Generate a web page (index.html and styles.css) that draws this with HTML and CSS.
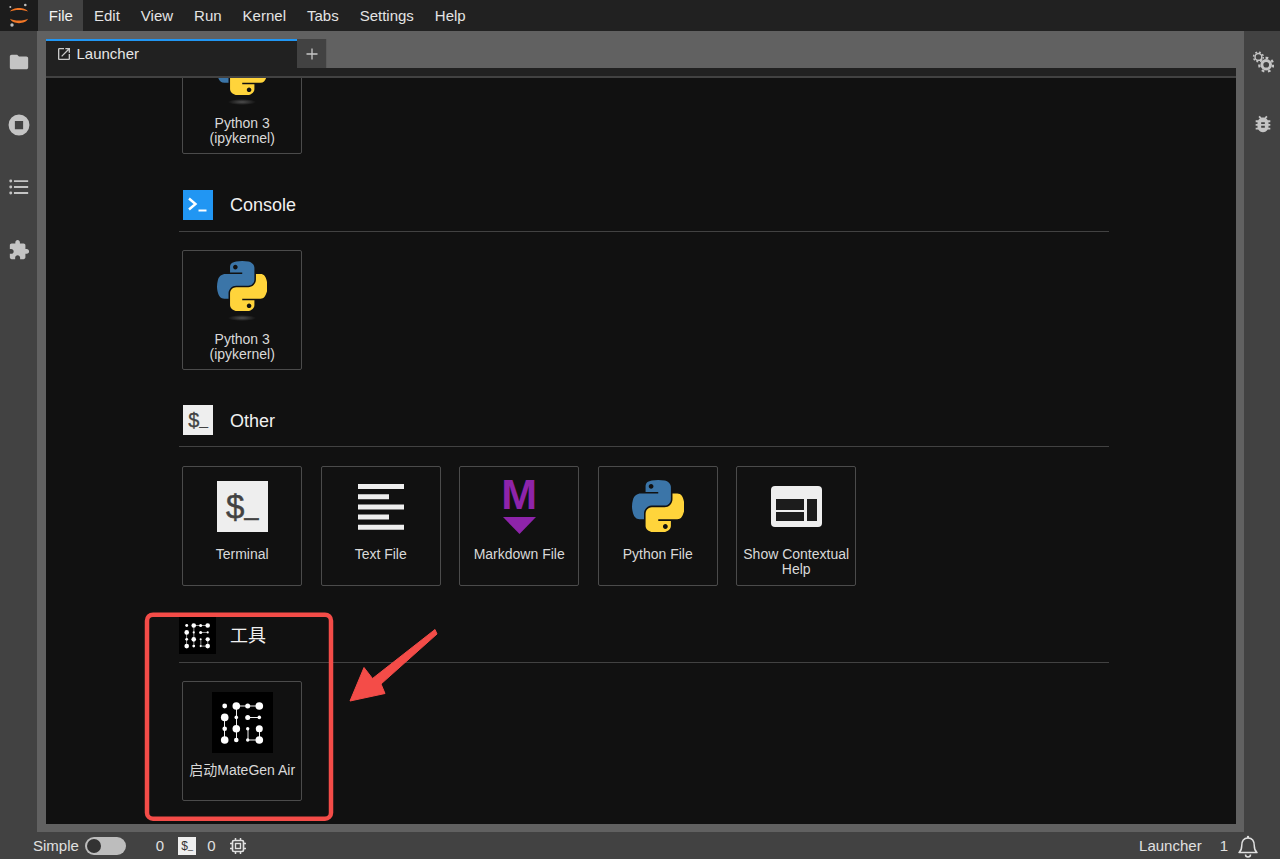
FILE: index.html
```html
<!DOCTYPE html>
<html lang="en">
<head>
<meta charset="utf-8">
<title>JupyterLab</title>
<link rel="stylesheet" href="styles.css">
</head>
<body>
<svg class="defs" width="0" height="0" aria-hidden="true">
  <symbol id="py" viewBox="0 0 110 110">
    <path fill="#3b75a8" d="M54.919 0c-4.584.022-8.961.413-12.813 1.095C30.76 3.099 28.7 7.295 28.7 15.032v10.219h26.813v3.406H18.638c-7.793 0-14.616 4.684-16.75 13.594-2.462 10.213-2.571 16.586 0 27.25 1.905 7.938 6.457 13.594 14.25 13.594h9.218v-12.25c0-8.85 7.657-16.656 16.75-16.656h26.782c7.454 0 13.406-6.138 13.406-13.625v-25.531c0-7.266-6.13-12.725-13.406-13.937C64.282.328 59.502-.02 54.918 0zm-14.5 8.22c2.77 0 5.031 2.298 5.031 5.125 0 2.816-2.262 5.093-5.031 5.093-2.78 0-5.031-2.277-5.031-5.093 0-2.827 2.251-5.125 5.031-5.125z"/>
    <path fill="#ffd43b" d="M85.638 28.657v11.906c0 9.231-7.826 17-16.75 17H42.106c-7.336 0-13.406 6.279-13.406 13.625v25.532c0 7.266 6.318 11.54 13.406 13.625 8.487 2.496 16.626 2.947 26.782 0 6.75-1.954 13.406-5.888 13.406-13.625V86.5H55.513v-3.405h40.187c7.793 0 10.696-5.436 13.406-13.594 2.8-8.399 2.68-16.476 0-27.25-1.926-7.757-5.604-13.594-13.406-13.594H85.638zM70.575 93.313c2.78 0 5.03 2.277 5.03 5.093 0 2.827-2.25 5.125-5.03 5.125-2.77 0-5.03-2.298-5.03-5.125 0-2.816 2.26-5.093 5.03-5.093z"/>
  </symbol>
  <symbol id="kernel" viewBox="0 0 52 66">
    <defs><radialGradient id="shadow"><stop offset="0" stop-color="#4e4e4e"/><stop offset="1" stop-color="#111"/></radialGradient></defs>
    <use href="#py" x="1" y="0" width="50" height="50"/>
    <ellipse cx="26" cy="57" rx="14" ry="3" fill="url(#shadow)"/>
  </symbol>
  <symbol id="mate" viewBox="0 0 61 61">
    <rect width="61" height="61" fill="#000"/>
    <g stroke="#eee" stroke-width="1" fill="none">
      <path d="M24.5 14H47.5M12.5 25.5V48M24.5 14V48M36 25.5H47.5M36 37V48H47.5V37"/>
    </g>
    <g fill="#fff">
      <circle cx="12.7" cy="14" r="2.4"/><circle cx="24.3" cy="14" r="3.8"/><circle cx="35.7" cy="14" r="2.5"/><circle cx="47.3" cy="14" r="3.8"/>
      <circle cx="12.7" cy="25.4" r="3.8"/><circle cx="24.3" cy="25.4" r="1.8"/><circle cx="35.7" cy="25.4" r="2.5"/><circle cx="47.3" cy="25.4" r="1.8"/>
      <circle cx="12.7" cy="36.8" r="2.3"/><circle cx="24.3" cy="36.8" r="3.8"/><circle cx="35.7" cy="36.8" r="1.7"/><circle cx="47.3" cy="36.8" r="3.5"/>
      <circle cx="12.7" cy="48" r="3.8"/><circle cx="24.3" cy="48" r="2.3"/><circle cx="35.7" cy="48" r="1.7"/><circle cx="47.3" cy="48" r="3.8"/>
    </g>
  </symbol>
</svg>

<div class="app">
  <header class="menubar">
    <div class="logo">
      <svg width="38" height="31" viewBox="0 0 38 31">
        <path fill="#f37726" d="M10 11.600C12.500 6.800 25.500 6.800 28 11.600 24.500 9.300 13.500 9.300 10 11.600z"/>
        <path fill="#f37726" d="M10 18.800C13.500 21.200 24.500 21.200 28 18.800 25.500 24.600 12.500 24.600 10 18.800z"/>
        <circle cx="25.300" cy="5" r="1.300" fill="#bdbdbd"/>
        <circle cx="10.300" cy="7" r="1" fill="#bdbdbd"/>
        <circle cx="12" cy="25" r="1.700" fill="#bdbdbd"/>
      </svg>
    </div>
    <nav class="menu">
      <span class="menu-item active">File</span>
      <span class="menu-item">Edit</span>
      <span class="menu-item">View</span>
      <span class="menu-item">Run</span>
      <span class="menu-item">Kernel</span>
      <span class="menu-item">Tabs</span>
      <span class="menu-item">Settings</span>
      <span class="menu-item">Help</span>
    </nav>
  </header>

  <div class="middle">
    <aside class="side side-left">
      <svg class="side-icon" viewBox="0 0 24 24"><path d="M10 4H4c-1.100 0-1.990.9-1.990 2L2 18c0 1.100.9 2 2 2h16c1.100 0 2-.9 2-2V8c0-1.100-.9-2-2-2h-8l-2-2z"/></svg>
      <svg class="side-icon" viewBox="0 0 24 24"><path fill-rule="evenodd" d="M12 .6a11.400 11.400 0 1 0 0 22.800A11.400 11.400 0 0 0 12 .6zM7.500 7.500h9v9h-9z"/></svg>
      <svg class="side-icon" viewBox="0 0 24 24"><path d="M6.500 4.500h15.500v2H6.500zM6.500 11h15.500v2H6.500zM6.500 17.500h15.500v2H6.500z"/><circle cx="3" cy="5.500" r="1.600"/><circle cx="3" cy="12" r="1.600"/><circle cx="3" cy="18.500" r="1.600"/></svg>
      <svg class="side-icon" viewBox="0 0 24 24"><path d="M20.500 11H19V7c0-1.100-.9-2-2-2h-4V3.500C13 2.120 11.880 1 10.500 1S8 2.120 8 3.500V5H4c-1.100 0-1.990.9-1.990 2v3.800H3.500c1.490 0 2.700 1.210 2.700 2.700s-1.210 2.700-2.700 2.700H2V20c0 1.100.9 2 2 2h3.800v-1.500c0-1.490 1.210-2.700 2.700-2.700 1.490 0 2.700 1.210 2.700 2.700V22H17c1.100 0 2-.9 2-2v-4h1.500c1.380 0 2.500-1.120 2.500-2.500S21.880 11 20.500 11z"/></svg>
    </aside>

    <main class="dock">
      <div class="tabs">
        <div class="tab">
          <svg class="tab-icon" viewBox="0 0 24 24"><path d="M19 19H5V5h7V3H5c-1.110 0-2 .9-2 2v14c0 1.100.89 2 2 2h14c1.100 0 2-.9 2-2v-7h-2v7zM14 3v2h3.590l-9.830 9.830 1.410 1.410L19 6.410V10h2V3h-7z"/></svg>
          <span>Launcher</span>
        </div>
        <div class="tab-add">
          <svg width="12" height="12" viewBox="0 0 12 12"><path d="M6 .5v11M.5 6h11" stroke="#c8c8c8" stroke-width="1.300"/></svg>
        </div>
      </div>
      <div class="toolbar"></div>
      <div class="launcher">
        <div class="launcher-inner">
          <section class="group group-first">
            <div class="cards">
              <div class="card">
                <div class="card-icon pt-10"><svg width="52" height="66"><use href="#kernel"/></svg></div>
                <div class="card-label">Python 3<br>(ipykernel)</div>
              </div>
            </div>
          </section>

          <section class="group">
            <div class="group-head">
              <div class="head-icon console-icon">
                <svg width="30" height="30" viewBox="0 0 30 30"><path d="M6 8.500 12.500 14 6 19.500" fill="none" stroke="#fff" stroke-width="2.400"/><path d="M15.500 20.500h8" stroke="#fff" stroke-width="2"/></svg>
              </div>
              <h2>Console</h2>
            </div>
            <div class="cards">
              <div class="card">
                <div class="card-icon pt-10"><svg width="52" height="66"><use href="#kernel"/></svg></div>
                <div class="card-label">Python 3<br>(ipykernel)</div>
              </div>
            </div>
          </section>

          <section class="group">
            <div class="group-head">
              <div class="head-icon term-small"><span>$</span><span class="under">_</span></div>
              <h2>Other</h2>
            </div>
            <div class="cards">
              <div class="card">
                <div class="card-icon pt-14"><div class="term-big"><span>$</span><span class="under">_</span></div></div>
                <div class="card-label">Terminal</div>
              </div>
              <div class="card">
                <div class="card-icon pt-17">
                  <svg width="46" height="46" viewBox="0 0 46 46" class="light"><path d="M0 0h46v5H0zM0 10.200h31v5H0zM0 20.400h46v5H0zM0 30.600h31v5H0zM0 40.700h46v5H0z"/></svg>
                </div>
                <div class="card-label">Text File</div>
              </div>
              <div class="card">
                <div class="card-icon md-icon">
                  <span class="md-m">M</span>
                  <svg width="33" height="17" viewBox="0 0 33 17"><path d="M0 0h33L16.500 17z" fill="#8e24aa"/></svg>
                </div>
                <div class="card-label">Markdown File</div>
              </div>
              <div class="card">
                <div class="card-icon pt-13"><svg width="52" height="52"><use href="#py"/></svg></div>
                <div class="card-label">Python File</div>
              </div>
              <div class="card">
                <div class="card-icon pt-19">
                  <svg width="51" height="41" viewBox="0 0 51 41"><rect width="51" height="41" rx="4" fill="#eee"/><path d="M5 13h28v11H5zM5 26h28v9H5zM36 13h10v22H36z" fill="#1c1c1c"/></svg>
                </div>
                <div class="card-label">Show Contextual<br>Help</div>
              </div>
            </div>
          </section>

          <section class="group">
            <div class="group-head">
              <svg class="head-mate" width="37" height="37"><use href="#mate"/></svg>
              <h2 class="cjk">工具</h2>
            </div>
            <div class="cards">
              <div class="card">
                <div class="card-icon pt-10"><svg width="61" height="61"><use href="#mate"/></svg></div>
                <div class="card-label cjk">启动MateGen Air</div>
              </div>
            </div>
          </section>
        </div>
      </div>
    </main>

    <aside class="side side-right">
      <svg class="side-icon gears" viewBox="0 0 24 24">
        <g fill="none" stroke="#c4c4c4">
          <circle cx="7" cy="6.500" r="3.700" stroke-width="1.600"/>
          <circle cx="7" cy="6.500" r="5.300" stroke-width="1.600" stroke-dasharray="2.100 2.060"/>
          <circle cx="15.500" cy="15" r="4.700" stroke-width="3.200"/>
          <circle cx="15.500" cy="15" r="7.600" stroke-width="2.400" stroke-dasharray="3 3.970"/>
        </g>
      </svg>
      <svg class="side-icon" viewBox="0 0 24 24"><path d="M20 8h-2.810c-.45-.78-1.070-1.450-1.820-1.960L17 4.410 15.590 3l-2.170 2.170C12.960 5.060 12.490 5 12 5c-.49 0-.96.06-1.410.17L8.410 3 7 4.410l1.620 1.630C7.880 6.550 7.260 7.220 6.810 8H4v2h2.090c-.05.33-.09.66-.09 1v1H4v2h2v1c0 .34.04.67.09 1H4v2h2.810c1.040 1.790 2.970 3 5.190 3s4.150-1.210 5.190-3H20v-2h-2.090c.05-.33.09-.66.09-1v-1h2v-2h-2v-1c0-.34-.04-.67-.09-1H20V8zm-6 8h-4v-2h4v2zm0-4h-4v-2h4v2z"/></svg>
    </aside>
  </div>

  <footer class="status">
    <span class="status-simple">Simple</span>
    <span class="toggle"><span class="thumb"></span></span>
    <span class="status-num first">0</span>
    <span class="status-term"><span>$</span><span class="under">_</span></span>
    <span class="status-num">0</span>
    <svg class="chip" width="18" height="18" viewBox="0 0 18 18"><g fill="none" stroke="#e0e0e0"><rect x="3.500" y="3.500" width="11" height="11" rx="1.500" stroke-width="1.700"/><rect x="6.500" y="6.500" width="5" height="5" stroke-width="1.400"/><path d="M6.500 1v2.500M11.500 1v2.500M6.500 14.500V17M11.500 14.500V17M1 6.500h2.500M1 11.500h2.500M14.500 6.500H17M14.500 11.500H17" stroke-width="1.500"/></g></svg>
    <span class="status-right">Launcher</span>
    <span class="status-count">1</span>
    <svg class="bell" width="22" height="24" viewBox="0 0 22 24"><path d="M2 18.500c2.200-1.700 2.700-3.500 2.700-6.500 0-4.500 2-8 6.300-8s6.300 3.500 6.300 8c0 3 .5 4.800 2.700 6.500z" fill="none" stroke="#e0e0e0" stroke-width="1.500" stroke-linejoin="round"/><path d="M8.500 20.500a2.500 2.500 0 0 0 5 0" fill="none" stroke="#e0e0e0" stroke-width="1.500"/><circle cx="11" cy="3" r="1.200" fill="#e0e0e0"/></svg>
  </footer>

  <svg class="annotation" width="1280" height="859" viewBox="0 0 1280 859" aria-hidden="true">
    <rect x="147" y="614.700" width="184" height="204" rx="6" fill="none" stroke="#f44c48" stroke-width="4.500"/>
    <path d="M350 701 364 667.500 372.500 678.500 435 629.500 437 634 381 684 385 693.500z" fill="#f44c48" stroke="#f44c48" stroke-width="1" stroke-linejoin="round"/>
  </svg>
</div>
</body>
</html>
```
FILE: styles.css
```css
* { box-sizing: border-box; }
html, body { margin: 0; height: 100%; overflow: hidden; }
body {
  background: #424242;
  color: #e6e6e6;
  font-family: "Liberation Sans", "Noto Sans CJK SC", sans-serif;
}
.defs { position: absolute; }
.app { position: relative; display: flex; flex-direction: column; width: 1280px; height: 859px; }

/* menu bar */
.menubar { display: flex; height: 31px; background: #212121; flex: none; }
.logo { width: 38px; height: 31px; flex: none; background: #1c1c1c; }
.logo svg { display: block; }
.menu { display: flex; margin-left: 0.300px; }
.menu-item { display: flex; align-items: center; padding: 0 10.500px; font-size: 15px; color: #e4e4e4; }
.menu-item.active { background: #424242; color: #f2f2f2; }

/* middle */
.middle { display: flex; flex: 1; min-height: 0; }
.side { flex: none; background: #424242; display: flex; flex-direction: column; align-items: center; }
.side-left { width: 37px; padding-top: 20px; gap: 40.500px; }
.side-right { width: 36px; padding-top: 20px; gap: 40px; align-items: flex-start; padding-left: 8px; }
.side-icon { width: 22px; height: 22px; fill: #c4c4c4; flex: none; }

.dock {
  flex: 1;
  min-width: 0;
  display: flex;
  flex-direction: column;
  background: #616161;
  padding: 8px 8px 8px 9px;
}
.tabs { display: flex; height: 29px; flex: none; }
.tab {
  width: 251px;
  height: 37px;
  background: #212121;
  border-top: 2px solid #2196f3;
  display: flex;
  align-items: flex-start;
  padding: 4px 0 0 10px;
  font-size: 15px;
  color: #e6e6e6;
  z-index: 1;
}
.tab span { line-height: 18px; margin-left: 4.500px; }
.tab-icon { width: 16px; height: 16px; fill: #c8c8c8; margin-top: 1px; }
.tab-add {
  width: 30px;
  height: 29px;
  background: #424242;
  display: flex;
  align-items: center;
  justify-content: center;
  border-right: 1px solid #5a5a5a;
}
.toolbar { height: 10px; flex: none; background: #212121; border-bottom: 2px solid #424242; }

/* launcher */
.launcher { flex: 1; min-height: 0; background: #111; overflow: hidden; }
.launcher-inner { width: 930px; margin: -44px 0 0 133px; }
.group { padding-top: 35px; }
.group-first { padding-top: 0; margin-bottom: 0.800px; }
.group-head {
  position: relative;
  display: flex;
  align-items: center;
  height: 42px;
  padding: 0 0 10px 51px;
  border-bottom: 1px solid #424242;
  margin-bottom: 18.500px;
}
.group-head h2 { margin: 0; font-size: 18px; font-weight: 400; color: #f0f0f0; line-height: 30px; }
.head-icon {
  position: absolute;
  left: 4px;
  top: 0;
  width: 30px;
  height: 30px;
  display: flex;
  align-items: center;
  justify-content: center;
}
.console-icon { background: #2196f3; }
.term-small { background: #eee; color: #424242; font-size: 20px; line-height: 30px; -webkit-text-stroke: 0.300px #424242; }
.term-small .under { font-size: 15px; }
.head-mate { position: absolute; left: 0; top: -4px; }
.cjk { font-family: "Liberation Sans", "Noto Sans CJK SC", sans-serif; }
.cards { display: flex; gap: 18.500px; padding-left: 3.200px; }
.card {
  width: 120px;
  height: 120px;
  flex: none;
  border: 1px solid #4b4b4b;
  border-radius: 2px;
  background: #111;
}
.card-icon { height: 80.500px; display: flex; justify-content: center; align-items: flex-start; }
.card-icon svg { display: block; }
.pt-10 { padding-top: 10px; }
.pt-13 { padding-top: 13px; }
.pt-14 { padding-top: 14px; }
.pt-17 { padding-top: 17px; }
.pt-19 { padding-top: 19px; }
.light { fill: #eee; }
.card-label {
  font-size: 14px;
  line-height: 15px;
  text-align: center;
  color: #d9d9d9;
  white-space: nowrap;
}
.term-big {
  width: 51px;
  height: 51px;
  background: #eee;
  color: #424242;
  font-size: 33px;
  -webkit-text-stroke: 0.500px #424242;
  display: flex;
  align-items: center;
  justify-content: center;
  line-height: 51px;
}
.term-big .under { font-size: 25px; }
.md-icon { flex-direction: column; align-items: center; justify-content: flex-start; padding-top: 12px; }
.md-m {
  display: block;
  font-size: 43px;
  font-weight: 700;
  line-height: 31px;
  height: 38px;
  color: #8e24aa;
}

/* status bar */
.status {
  flex: none;
  height: 27px;
  background: #424242;
  display: flex;
  align-items: center;
  font-size: 15px;
  color: #e0e0e0;
  padding-left: 33px;
}
.toggle {
  width: 41px;
  height: 18px;
  margin-left: 6px;
  border-radius: 9px;
  background: #bdbdbd;
  padding: 2px;
  display: flex;
}
.thumb { width: 14px; height: 14px; border-radius: 50%; background: #333; }
.status-num.first { margin-left: 30px; }
.status-term {
  width: 18px;
  height: 18px;
  margin: 1px 11px 0 14px;
  background: #eee;
  color: #333;
  font-size: 12px;
  display: flex;
  align-items: center;
  justify-content: center;
}
.status-term .under { font-size: 9px; }
.chip { margin-left: 13px; }
.status-right { margin-left: auto; }
.status-count { margin-left: 18px; }
.bell { margin: 0 21px 0 9px; }

/* annotation drawn over the page */
.annotation { position: absolute; left: 0; top: 0; pointer-events: none; }
```
